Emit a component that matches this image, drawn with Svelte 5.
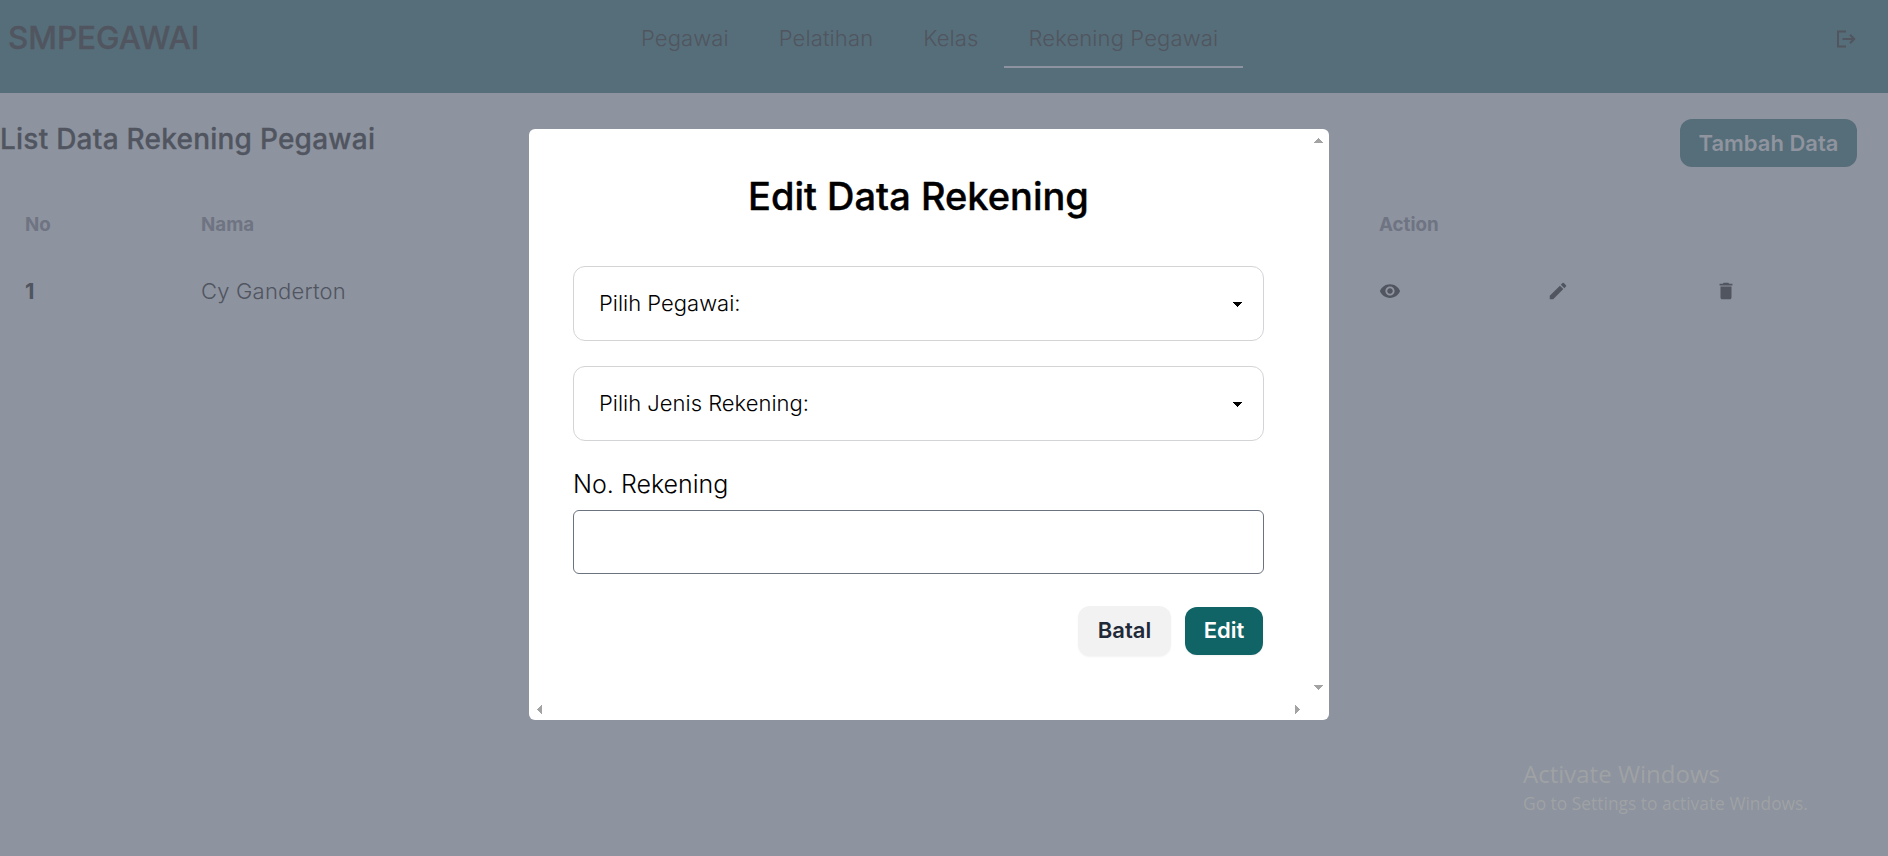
<script>
  const links = ['Pegawai', 'Pelatihan', 'Kelas', 'Rekening Pegawai'];
  const active = 'Rekening Pegawai';
  const selects = ['Pilih Pegawai:', 'Pilih Jenis Rekening:'];
  const rows = [{ no: 1, nama: 'Cy Ganderton' }];
</script>

<div class="page">
  <header>
    <div class="brand">SMPEGAWAI</div>
    <nav>
      {#each links as link}
        <a class:active={link === active}>{link}</a>
      {/each}
    </nav>
    <svg class="logout" viewBox="0 0 20 18" fill="none" stroke="currentColor" stroke-width="2">
      <path d="M10 1.6H2v14.8h8M6.5 9H18M14 4.8 18.2 9 14 13.2" />
    </svg>
  </header>

  <main>
    <div class="titlebar">
      <h2>List Data Rekening Pegawai</h2>
      <button class="add">Tambah Data</button>
    </div>
    <div class="table">
      <div class="row head"><span>No</span><span>Nama</span><span>Action</span></div>
      {#each rows as row}
        <div class="row">
          <b>{row.no}</b>
          <span>{row.nama}</span>
          <div class="actions">
            <svg viewBox="0 0 24 24" fill="currentColor"><path d="M12 4.5C7 4.5 2.73 7.61 1 12c1.73 4.39 6 7.5 11 7.5s9.27-3.11 11-7.5c-1.73-4.39-6-7.5-11-7.5zM12 17c-2.76 0-5-2.24-5-5s2.24-5 5-5 5 2.24 5 5-2.24 5-5 5zm0-8c-1.66 0-3 1.34-3 3s1.34 3 3 3 3-1.34 3-3-1.34-3-3-3z" /></svg>
            <svg viewBox="0 0 24 24" fill="currentColor"><path d="M3 17.25V21h3.75L17.81 9.94l-3.75-3.75L3 17.25zM20.71 7.04a1 1 0 0 0 0-1.41l-2.34-2.34a1 1 0 0 0-1.41 0l-1.83 1.83 3.75 3.75 1.83-1.83z" /></svg>
            <svg viewBox="0 0 24 24" fill="currentColor"><path d="M6 19c0 1.1.9 2 2 2h8c1.1 0 2-.9 2-2V7H6v12zM19 4h-3.5l-1-1h-5l-1 1H5v2h14V4z" /></svg>
          </div>
        </div>
      {/each}
    </div>
  </main>

  <div class="modal">
    <h3>Edit Data Rekening</h3>
    {#each selects as label}
      <div class="select">
        <span>{label}</span>
        <svg viewBox="0 0 9 5" shape-rendering="crispEdges"><path d="M0 0h9L4.5 5z" /></svg>
      </div>
    {/each}
    <label for="rekening">No. Rekening</label>
    <input id="rekening" type="text" />
    <div class="buttons">
      <button class="cancel">Batal</button>
      <button class="save">Edit</button>
    </div>
    <svg class="arrow up" viewBox="0 0 9 5"><path d="M0 5h9L4.5 0z" /></svg>
    <svg class="arrow down" viewBox="0 0 9 5"><path d="M0 0h9L4.5 5z" /></svg>
    <svg class="arrow left" viewBox="0 0 5 9"><path d="M5 0v9L0 4.5z" /></svg>
    <svg class="arrow right" viewBox="0 0 5 9"><path d="M0 0v9l5-4.5z" /></svg>
  </div>

  <div class="watermark">
    <div class="big">Activate Windows</div>
    <div>Go to Settings to activate Windows.</div>
  </div>
</div>

<style>
  :global(body) { margin: 0; background: #8d939f; }
  .page {
    position: relative;
    box-sizing: border-box;
    height: 856px;
    overflow: hidden;
    background: #8d939f;
    color: #50555f;
    font: 350 22px/35px Inter, sans-serif;
  }
  button { border: 0; font: 600 22px/28px Inter, sans-serif; }
  header {
    display: grid;
    grid-template-columns: 608px 1fr auto;
    align-items: start;
    box-sizing: border-box;
    height: 93px;
    padding: 8px 32px 0 8px;
    background: #566e79;
  }
  .brand { font: 550 31.4px/60px Inter, sans-serif; -webkit-text-stroke: 0.3px currentColor; }
  nav { display: flex; letter-spacing: 0.12px; }
  nav a { box-sizing: border-box; height: 60px; padding: 0 25px; line-height: 61px; border-bottom: 2px solid transparent; }
  nav a.active { border-bottom-color: #8d93a1; }
  .logout { width: 20px; height: 18px; margin-top: 22px; }
  .titlebar { display: flex; justify-content: space-between; height: 93px; padding: 26px 31px 0 0; box-sizing: border-box; }
  h2 { margin: 0; font: 550 28px/40px Inter, sans-serif; letter-spacing: 0.24px; -webkit-text-stroke: 0.3px currentColor; }
  .add { width: 177px; height: 48px; padding: 0; border-radius: 12px; background: #566e79; color: #8f949f; }
  .row {
    display: grid;
    grid-template-columns: 176px 1178px 1fr;
    align-items: center;
    height: 67px;
    padding-left: 25px;
  }
  .row:not(.head) { height: 58px; letter-spacing: 0.2px; }
  .row b { font-weight: 700; }
  .head { height: 76px; font-size: 18.75px; font-weight: 700; color: #6f7482; }
  .actions { display: grid; grid-template-columns: repeat(3, 168px); }
  .actions svg { width: 22px; height: 22px; }
  .modal {
    position: absolute;
    left: 529px;
    top: 129px;
    box-sizing: border-box;
    width: 800px;
    height: 591px;
    padding: 42px 65px 0 44px;
    border-radius: 6px;
    background: #fff;
    color: #000;
  }
  h3 { margin: 0 0 45px; text-align: center; font: 550 38px/50px Inter, sans-serif; -webkit-text-stroke: 0.4px currentColor; }
  .select {
    display: flex;
    align-items: center;
    justify-content: space-between;
    box-sizing: border-box;
    height: 75px;
    margin-bottom: 25px;
    padding: 0 21px 0 25px;
    border: 1px solid #d3d4d6;
    border-radius: 12px;
  }
  .select svg { width: 9px; height: 5px; margin-top: 2px; }
  label { display: block; font-size: 25px; line-height: 36px; }
  input { display: block; box-sizing: border-box; width: 100%; height: 64px; margin-top: 8px; border: 1px solid #6b7280; border-radius: 6px; background: #fff; appearance: none; }
  .buttons { display: flex; justify-content: flex-end; align-items: center; gap: 14px; margin-top: 32px; padding-right: 1px; }
  .cancel { width: 93px; height: 50px; padding: 0 0 2px; border-radius: 12px; background: #f2f2f2; color: #1f2937; box-shadow: 0 1px 2px #0000000d; }
  .save { width: 78px; height: 48px; padding: 0 0 2px; border-radius: 12px; background: #116466; color: #fff; box-shadow: 0 1px 2px #0000000d; }
  .arrow { position: absolute; fill: #a3a3a3; shape-rendering: crispEdges; }
  .up, .down { width: 9px; height: 5px; left: 785px; }
  .left, .right { width: 5px; height: 9px; top: 576px; }
  .up { top: 9px; }
  .down { top: 556px; }
  .left { left: 8px; }
  .right { left: 766px; }
  .watermark { position: absolute; left: 1523px; top: 757px; color: #9fa2a4; font: 400 17.4px/25px "Open Sans", sans-serif; white-space: nowrap; }
  .big { font-size: 24px; line-height: 34px; }
</style>
